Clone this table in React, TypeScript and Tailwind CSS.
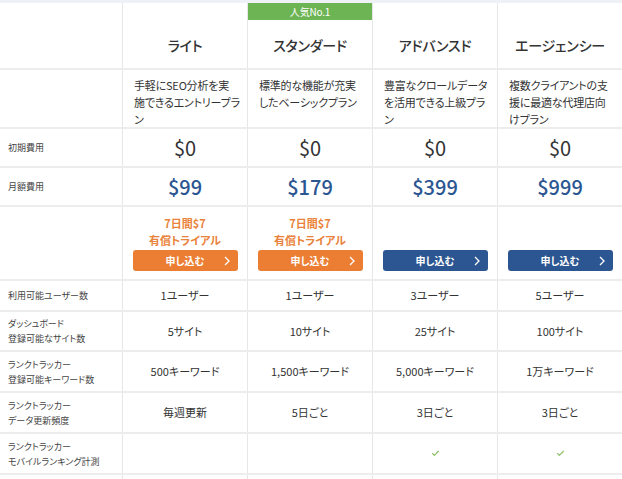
import { Check } from 'lucide-react'

type Plan = {
  name: string
  desc: string[]
  initial: string
  monthly: string
  trial: boolean
  users: string
  sites: string
  keywords: string
  freq: string
  mobile: boolean
}

const plans: Plan[] = [
  {
    name: 'ライト',
    desc: ['手軽にSEO分析を実', '施できるエントリープラ', 'ン'],
    initial: '$0',
    monthly: '$99',
    trial: true,
    users: '1ユーザー',
    sites: '5サイト',
    keywords: '500キーワード',
    freq: '毎週更新',
    mobile: false,
  },
  {
    name: 'スタンダード',
    desc: ['標準的な機能が充実', 'したベーシックプラン'],
    initial: '$0',
    monthly: '$179',
    trial: true,
    users: '1ユーザー',
    sites: '10サイト',
    keywords: '1,500キーワード',
    freq: '5日ごと',
    mobile: false,
  },
  {
    name: 'アドバンスド',
    desc: ['豊富なクロールデータ', 'を活用できる上級プラ', 'ン'],
    initial: '$0',
    monthly: '$399',
    trial: false,
    users: '3ユーザー',
    sites: '25サイト',
    keywords: '5,000キーワード',
    freq: '3日ごと',
    mobile: true,
  },
  {
    name: 'エージェンシー',
    desc: ['複数クライアントの支', '援に最適な代理店向', 'けプラン'],
    initial: '$0',
    monthly: '$999',
    trial: false,
    users: '5ユーザー',
    sites: '100サイト',
    keywords: '1万キーワード',
    freq: '3日ごと',
    mobile: true,
  },
]

const row = 'grid grid-cols-[122px_125px_125px_125px_125px] border-b-2 border-[#ededed]'
const cell = 'border-l border-[#e7e7e7]'

function Label({ lines }: { lines: string[] }) {
  return (
    <div className="flex flex-col justify-center px-2 text-[9px] leading-[15px] text-[#444]">
      {lines.map((l) => (
        <span key={l} className="whitespace-nowrap">
          {l}
        </span>
      ))}
    </div>
  )
}

function Chevron() {
  return (
    <svg width="6" height="10" viewBox="0 0 6 10" className="absolute right-[8px] top-[6px]">
      <path d="M1 1l4 4-4 4" fill="none" stroke="white" strokeWidth="1.3" />
    </svg>
  )
}

function Apply({ orange }: { orange: boolean }) {
  return (
    <div
      className={
        orange
          ? 'relative flex h-[21px] w-[105px] items-center justify-center rounded-[3px] bg-[#ec7e33] text-[10px] font-bold text-white'
          : 'relative flex h-[21px] w-[105px] items-center justify-center rounded-[3px] bg-[#2b5692] text-[10px] font-bold text-white'
      }
    >
      申し込む
      <Chevron />
    </div>
  )
}

function ValueRow({ label, h, values }: { label: string[]; h: string; values: string[] }) {
  return (
    <div className={`${row} ${h}`}>
      <Label lines={label} />
      {values.map((v, i) => (
        <div key={i} className={`${cell} flex items-center justify-center text-[11px] text-[#333]`}>
          {v}
        </div>
      ))}
    </div>
  )
}

export default function App() {
  return (
    <div
      className="w-[622px] overflow-hidden border-t-[3px] border-[#eef1f5] bg-white text-[#333] [font-feature-settings:'palt']"
      style={{ fontFamily: '"Noto Sans CJK JP", "Noto Sans", sans-serif' }}
    >
      {/* header */}
      <div className={`${row} h-[67px]`}>
        <div />
        {plans.map((p, i) => (
          <div key={p.name} className={`${cell} relative flex items-center justify-center pt-[20px] text-[14px] font-medium tracking-[-0.2px]`}>
            {i === 1 && (
              <div className="absolute left-0 right-0 top-0 flex h-[17px] items-center justify-center bg-[#6db454] text-[10px] font-normal text-white">
                人気No.1
              </div>
            )}
            {p.name}
          </div>
        ))}
      </div>

      {/* description */}
      <div className={`${row} h-[59px]`}>
        <div />
        {plans.map((p) => (
          <div key={p.name} className={`${cell} flex flex-col px-[11px] pt-[7px] text-[11px] leading-[17px] tracking-[-0.2px]`}>
            {p.desc.map((d) => (
              <span key={d} className="whitespace-nowrap">
                {d}
              </span>
            ))}
          </div>
        ))}
      </div>

      {/* prices */}
      <div className={`${row} h-[39px]`}>
        <Label lines={['初期費用']} />
        {plans.map((p) => (
          <div key={p.name} className={`${cell} flex items-center justify-center text-[20px] text-[#333]`}>
            {p.initial}
          </div>
        ))}
      </div>
      <div className={`${row} h-[39px]`}>
        <Label lines={['月額費用']} />
        {plans.map((p) => (
          <div key={p.name} className={`${cell} flex items-center justify-center text-[20px] font-medium text-[#2b5692]`}>
            {p.monthly}
          </div>
        ))}
      </div>

      {/* apply */}
      <div className={`${row} h-[74px]`}>
        <div />
        {plans.map((p) => (
          <div key={p.name} className={`${cell} flex flex-col items-center justify-end pb-[8px]`}>
            {p.trial && (
              <div className="mb-px text-center text-[11px] font-bold leading-[17px] text-[#e9823a]">
                7日間$7
                <br />
                有償トライアル
              </div>
            )}
            <Apply orange={p.trial} />
          </div>
        ))}
      </div>

      <ValueRow label={['利用可能ユーザー数']} h="h-[31px]" values={plans.map((p) => p.users)} />
      <ValueRow label={['ダッシュボード', '登録可能なサイト数']} h="h-[40px]" values={plans.map((p) => p.sites)} />
      <ValueRow label={['ランクトラッカー', '登録可能キーワード数']} h="h-[41px]" values={plans.map((p) => p.keywords)} />
      <ValueRow label={['ランクトラッカー', 'データ更新頻度']} h="h-[41px]" values={plans.map((p) => p.freq)} />

      <div className={`${row} h-[41px]`}>
        <Label lines={['ランクトラッカー', 'モバイルランキング計測']} />
        {plans.map((p) => (
          <div key={p.name} className={`${cell} flex items-center justify-center`}>
            {p.mobile && <Check size={9} strokeWidth={3} color="#8cc068" />}
          </div>
        ))}
      </div>

      <div className={`${row} h-[41px]`}>
        <div />
        {plans.map((p) => (
          <div key={p.name} className={cell} />
        ))}
      </div>
    </div>
  )
}
